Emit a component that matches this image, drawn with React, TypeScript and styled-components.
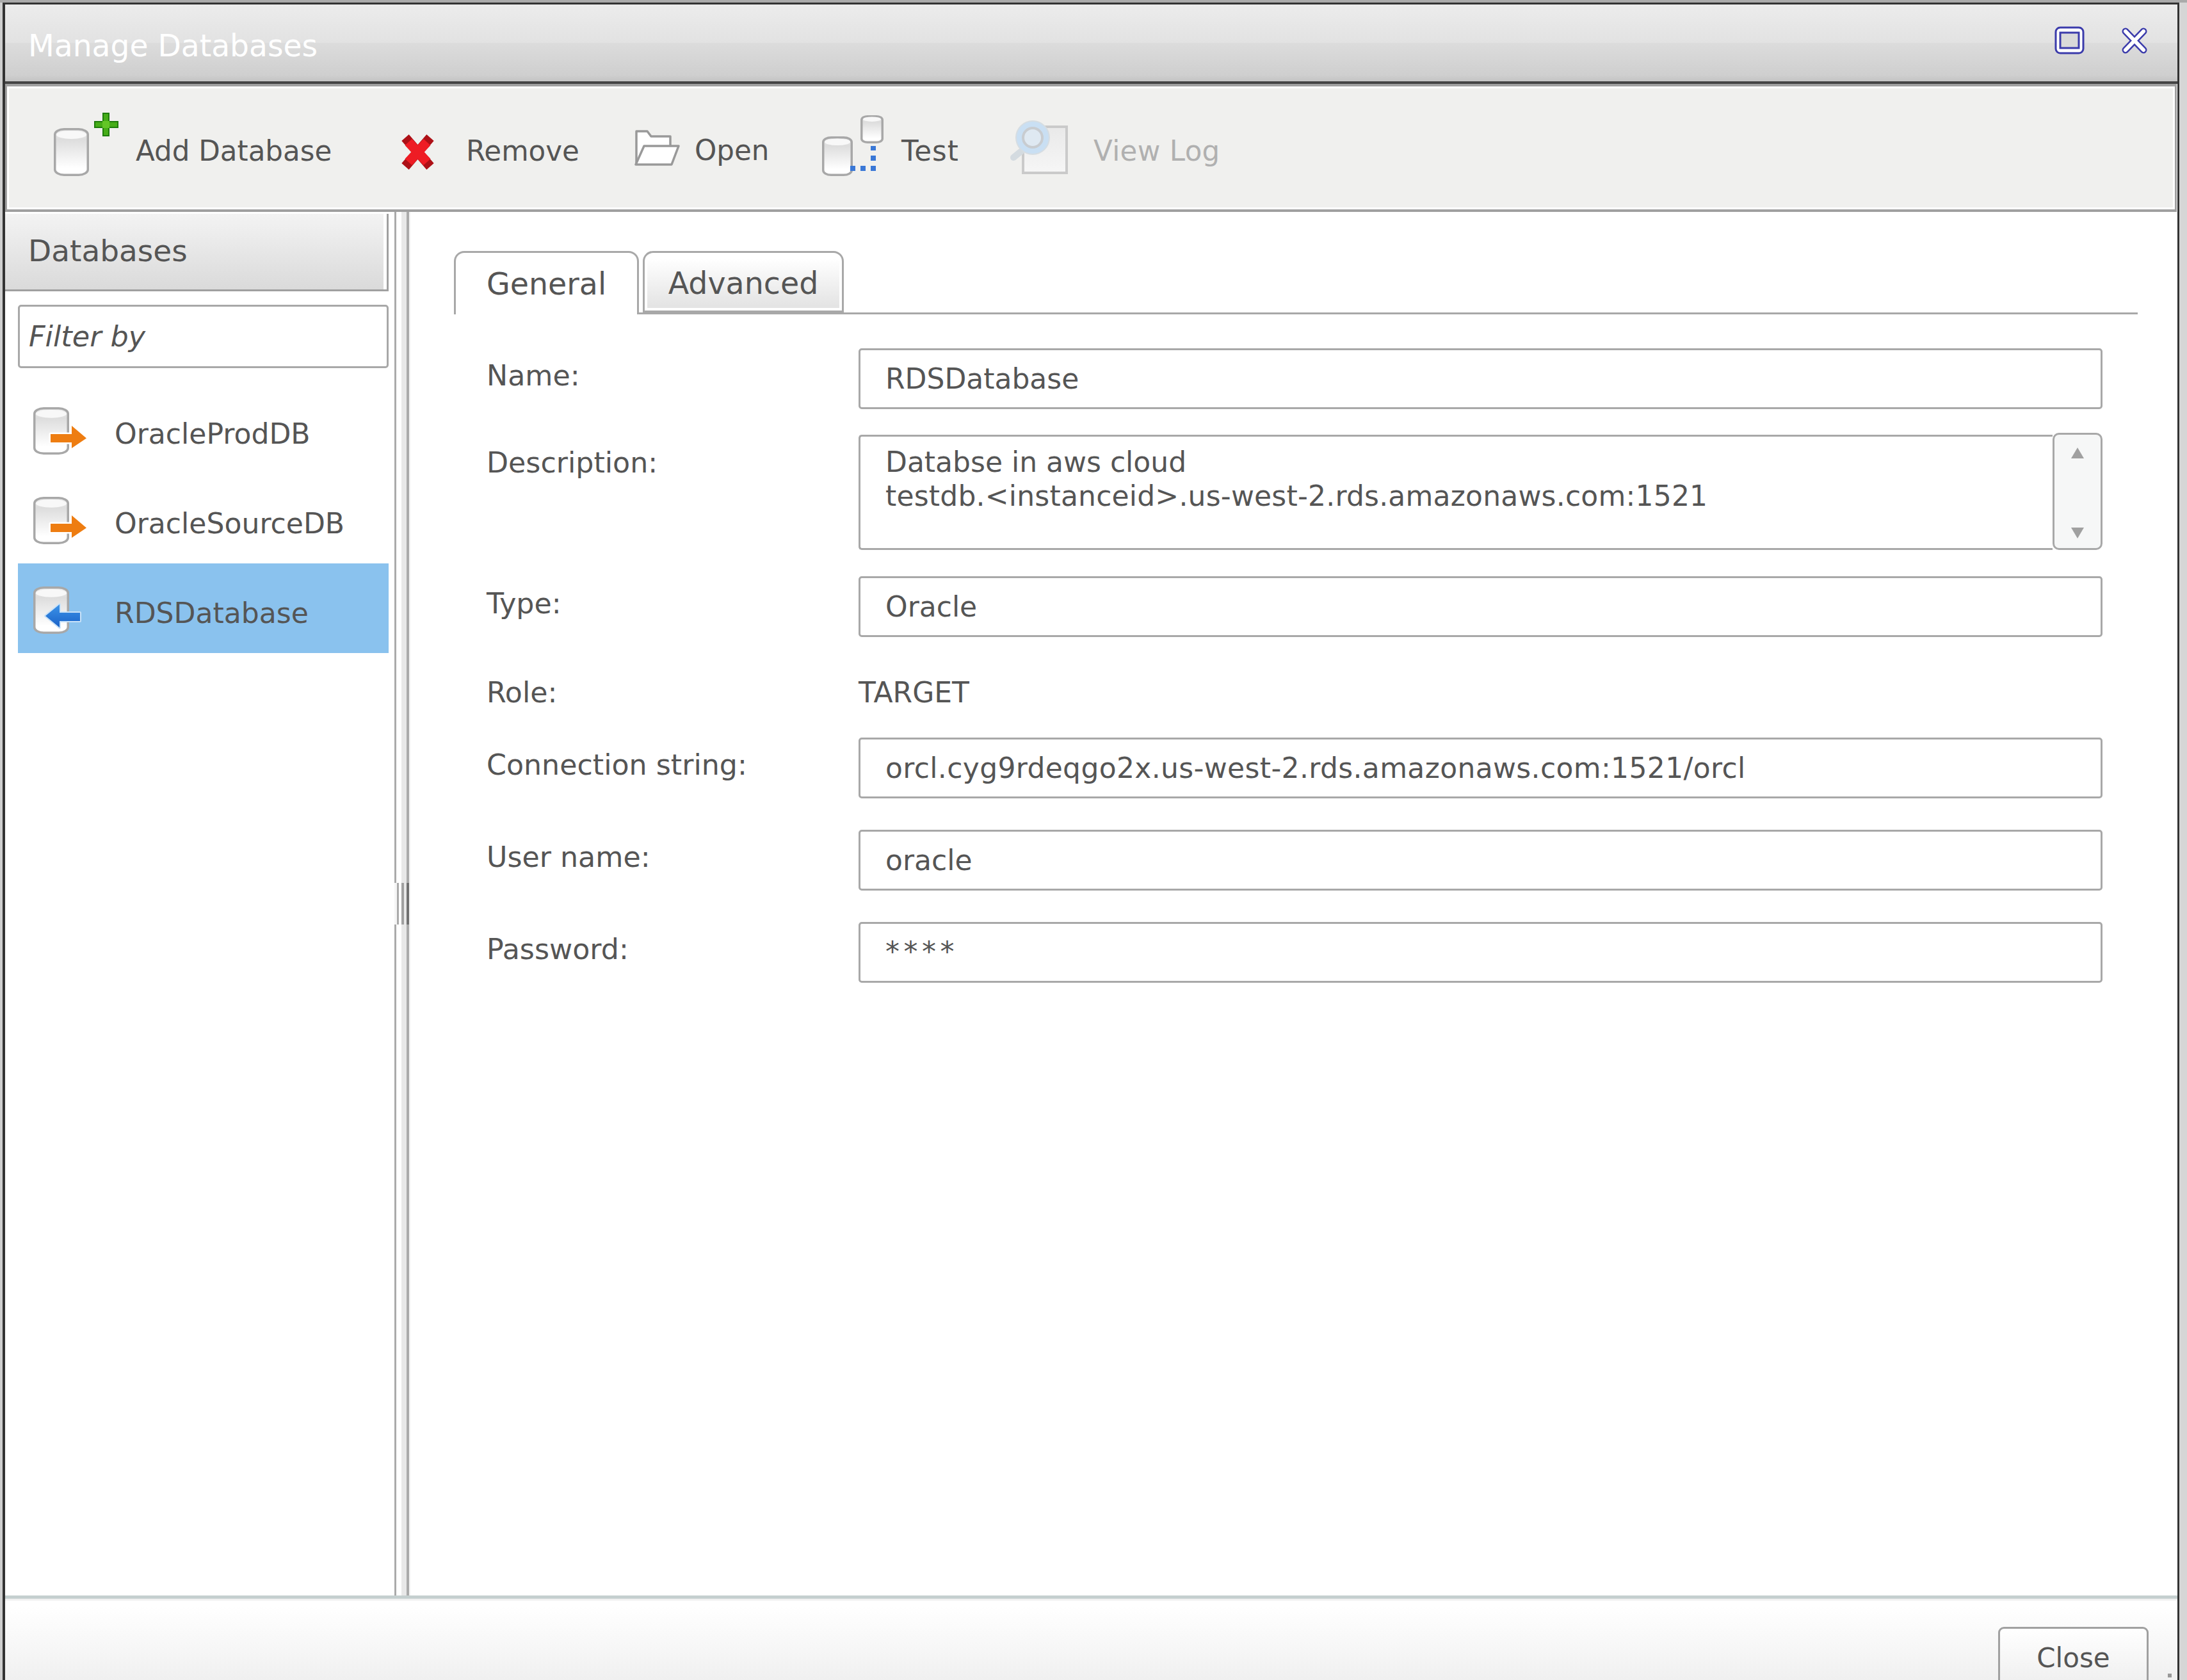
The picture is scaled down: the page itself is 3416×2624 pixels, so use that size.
import React from "react";
import styled, { createGlobalStyle } from "styled-components";

const GlobalStyle = createGlobalStyle`
  html, body { margin: 0; padding: 0; width: 3416px; height: 2624px; overflow: hidden; background: #d6d6d6; }
  body { font-family: "DejaVu Sans", "Liberation Sans", sans-serif; color: #555; }
  * { box-sizing: border-box; }
`;

const Page = styled.div`
  width: 3416px;
  height: 2624px;
  overflow: hidden;
  border-top: 4px solid #aaa;
  padding-left: 4px;
  background: linear-gradient(to right, #cfcfcf 4px, #d6d6d6 4px);
`;

const Window = styled.div`
  width: 3400px;
  height: 2620px;
  display: flex;
  flex-direction: column;
  border-left: 4px solid #333;
  border-right: 3px solid #333;
  border-top: 3px solid #333;
  background: #fff;
  overflow: hidden;
`;

const TitleBar = styled.div`
  flex: 0 0 124px;
  display: flex;
  align-items: center;
  padding: 0 46px 0 36px;
  border-bottom: 4px solid #444;
  background: linear-gradient(#ececec 0%, #e2e2e2 50%, #dcdcdc 50%, #cfcfcf 92%, #c4c4c4 100%);
`;

const Title = styled.div`
  font-size: 47.2px;
  line-height: 50px;
  padding-top: 10px;
  color: #fff;
`;

const TitleButtons = styled.div`
  margin-left: auto;
  display: flex;
  align-items: center;
  gap: 57px;
  margin-bottom: 8px;
`;

const Toolbar = styled.div`
  flex: 0 0 200px;
  display: flex;
  align-items: stretch;
  margin-right: 1px;
  padding-left: 73px;
  border: 4px solid #a0a0a0;
  border-width: 4px 3px;
  background: #f0f0ee;
  box-shadow: inset 0 0 0 3px #fff;
`;

const ToolButton = styled.div<{ $width: number; $gap: number }>`
  flex: 0 0 ${(p) => p.$width}px;
  display: flex;
  align-items: center;
  gap: ${(p) => p.$gap}px;
`;

const ToolLabel = styled.span<{ $disabled?: boolean; $drop?: number; $tracking?: number }>`
  font-size: 43.6px;
  line-height: 52px;
  padding-top: ${(p) => p.$drop ?? 9}px;
  letter-spacing: ${(p) => p.$tracking ?? 0}px;
  color: ${(p) => (p.$disabled ? "#b0b0b0" : "#555")};
  white-space: nowrap;
`;

const Body = styled.div`
  flex: 0 0 2161px;
  display: flex;
`;

const Sidebar = styled.div`
  flex: 0 0 608px;
  display: flex;
  flex-direction: column;
  padding-top: 3px;
`;

const SidebarHeader = styled.div`
  width: 599px;
  height: 121px;
  display: flex;
  align-items: center;
  padding: 0 0 4px 36px;
  font-size: 47px;
  border-right: 3px solid #a0a0a0;
  border-bottom: 3px solid #a0a0a0;
  background: linear-gradient(#f3f3f3, #dadada);
  box-shadow: inset -5px 0 0 #fff;
`;

const FilterBox = styled.div`
  height: 99px;
  margin: 21px 9px 25px 20px;
  display: flex;
  align-items: center;
  padding-left: 14px;
  border: 3px solid #a8a8a8;
  border-radius: 5px;
  font-size: 44.5px;
  font-style: italic;
`;

const DbRow = styled.div<{ $selected?: boolean }>`
  height: 140px;
  margin: 0 9px 0 20px;
  display: flex;
  align-items: center;
  gap: 45px;
  padding-left: 23px;
  background: ${(p) => (p.$selected ? "#8ac2ee" : "transparent")};
`;

const DbName = styled.span`
  font-size: 44.1px;
  line-height: 52px;
  padding-top: 16px;
`;

const Splitter = styled.div`
  flex: 0 0 25px;
  display: flex;
  align-items: center;
  background: linear-gradient(
    to right,
    #aaa 0 3px,
    #fff 3px 11px,
    #e8e8e8 11px 19px,
    #aaa 19px 23px,
    #f2f2f2 23px 25px
  );
`;

const SplitterGrip = styled.div`
  width: 25px;
  height: 65px;
  background: linear-gradient(
    to right,
    #f5f5f5 0 4px,
    #aaa 4px 7px,
    #fff 7px 11px,
    #a0a0a0 11px 15px,
    #e8e8e8 15px 19px,
    #707070 19px 23px,
    #f2f2f2 23px 25px
  );
`;

const Main = styled.div`
  flex: 1;
  display: flex;
  flex-direction: column;
  padding: 61px 62px 0 68px;
`;

const TabBar = styled.div`
  height: 99px;
  display: flex;
  align-items: flex-end;
  gap: 6px;
  border-bottom: 3px solid #a8a8a8;
`;

const Tab = styled.div<{ $active?: boolean; $width: number }>`
  width: ${(p) => p.$width}px;
  height: ${(p) => (p.$active ? 99 : 96)}px;
  margin-bottom: ${(p) => (p.$active ? -3 : 0)}px;
  display: flex;
  align-items: center;
  justify-content: center;
  font-size: 47.5px;
  padding-top: ${(p) => (p.$active ? 1 : 5)}px;
  border: 3px solid #a8a8a8;
  border-bottom: ${(p) => (p.$active ? "none" : "3px solid #a8a8a8")};
  border-radius: 16px 16px 0 0;
  background: ${(p) => (p.$active ? "#fff" : "linear-gradient(#fff 10%, #e4e4e4 92%)")};
  box-shadow: ${(p) => (p.$active ? "none" : "inset 4px 0 0 #fff, inset -4px 0 0 #fff, inset 0 -4px 0 #fff")};
`;

const Form = styled.div`
  display: flex;
  flex-direction: column;
  padding: 53px 0 0 51px;
`;

const FormRow = styled.div<{ $after?: number }>`
  display: grid;
  grid-template-columns: 581px 1943px;
  margin-bottom: ${(p) => p.$after ?? 0}px;
`;

const FieldLabel = styled.div<{ $top?: number }>`
  font-size: 44.3px;
  line-height: 53px;
  white-space: nowrap;
  padding-top: ${(p) => p.$top ?? 16}px;
`;

const Field = styled.div<{ $tracking?: number }>`
  height: 95px;
  display: flex;
  align-items: center;
  padding: 0 39px;
  border: 3px solid #a8a8a8;
  border-radius: 5px;
  font-size: 44px;
  letter-spacing: ${(p) => p.$tracking ?? 0}px;
  white-space: nowrap;
`;

const PasswordText = styled.span`
  letter-spacing: 6.5px;
  padding-bottom: 3px;
`;

const StaticValue = styled.div`
  font-size: 44px;
  line-height: 53px;
  padding-top: 2px;
`;

const DescriptionWrap = styled.div`
  height: 183px;
  display: flex;
  align-items: flex-end;
`;

const DescriptionText = styled.div`
  flex: 1;
  height: 180px;
  padding: 13px 0 0 39px;
  border: 3px solid #a8a8a8;
  border-right: none;
  border-radius: 5px 0 0 5px;
  font-size: 44px;
  line-height: 53px;
  white-space: nowrap;
`;

const DescriptionLine = styled.div<{ $tracking?: number }>`
  letter-spacing: ${(p) => p.$tracking ?? 0}px;
`;

const ScrollTrack = styled.div`
  flex: 0 0 78px;
  height: 183px;
  display: flex;
  flex-direction: column;
  justify-content: space-between;
  align-items: center;
  padding: 20px 0 15px;
  border: 3px solid #a8a8a8;
  border-radius: 10px;
  background: #f6f7f7;
`;

const ScrollArrow = styled.div<{ $down?: boolean }>`
  width: 0;
  height: 0;
  border-left: 10.5px solid transparent;
  border-right: 10.5px solid transparent;
  border-top: ${(p) => (p.$down ? "17px solid #a0a0a0" : "none")};
  border-bottom: ${(p) => (p.$down ? "none" : "17px solid #a0a0a0")};
`;

const Footer = styled.div`
  flex: 1;
  position: relative;
  display: flex;
  justify-content: flex-end;
  align-items: flex-start;
  padding: 44px 45px 0 0;
  overflow: hidden;
  border-top: 5px solid #c5cfcf;
  box-shadow: inset 0 3px 0 #f0f0f0;
  background: linear-gradient(#fff 10%, #f0f0f0 100%);
`;

const CloseButton = styled.div`
  flex: 0 0 235px;
  height: 92px;
  display: flex;
  align-items: center;
  justify-content: center;
  padding-top: 5px;
  font-size: 42px;
  border: 3px solid #a0a0a0;
  border-radius: 9px;
  background: linear-gradient(#fff, #efefef);
`;

const ResizeDot = styled.div`
  position: absolute;
  right: 9px;
  bottom: 4px;
  width: 6px;
  height: 6px;
  background: #999;
`;

const DefsHolder = styled.svg`
  display: block;
  width: 0;
  height: 0;
`;

const IconSvg = styled.svg`
  display: block;
  flex: none;
  overflow: visible;
`;

const Defs = () => (
  <DefsHolder aria-hidden="true">
    <defs>
      <linearGradient id="cylFill" x1="0" y1="0" x2="0" y2="1">
        <stop offset="0" stopColor="#ececec" />
        <stop offset="0.22" stopColor="#dddddd" />
        <stop offset="0.85" stopColor="#ffffff" />
        <stop offset="1" stopColor="#ffffff" />
      </linearGradient>
      <linearGradient id="paperFill" x1="0" y1="0" x2="0" y2="1">
        <stop offset="0" stopColor="#e9e9e9" />
        <stop offset="1" stopColor="#f6f6f6" />
      </linearGradient>
      <linearGradient id="blueArrow" x1="0" y1="0" x2="0" y2="1">
        <stop offset="0" stopColor="#3c93e8" />
        <stop offset="1" stopColor="#1a62c8" />
      </linearGradient>
    </defs>
  </DefsHolder>
);

const Cylinder = ({ x, y, w, h }: { x: number; y: number; w: number; h: number }) => (
  <g>
    <rect
      x={x + 1.75}
      y={y + 1.75}
      width={w - 3.5}
      height={h - 3.5}
      rx={w * 0.26}
      ry={w * 0.15}
      fill="url(#cylFill)"
      stroke="#a8a8a8"
      strokeWidth={3.5}
    />
    <ellipse cx={x + w / 2} cy={y + h * 0.14} rx={w / 2 - 4} ry={h * 0.085} fill="#f8f8f8" />
  </g>
);

const AddIcon = () => (
  <IconSvg width={101} height={120} viewBox="0 0 101 120">
    <Cylinder x={0} y={29} w={55} h={75} />
    <path d="M77 6h9v13h14v9H86v13h-9V28H64v-9h13z" fill="#46ad18" stroke="#1f7d0b" strokeWidth={2} />
    <rect x={76} y={18} width={11} height={11} fill="#63c626" />
  </IconSvg>
);

const RemoveIcon = () => (
  <IconSvg width={49} height={120} viewBox="0 0 49 120">
    <path d="M5 44L44 89M44 44L5 89" stroke="#ad1016" strokeWidth={15} />
    <path d="M10 51L39 82M39 51L10 82" stroke="#ee1c24" strokeWidth={15} />
  </IconSvg>
);

const FolderIcon = () => (
  <IconSvg width={71} height={120} viewBox="0 0 71 120">
    <path d="M3 84V34h17l6 8h30v14" fill="#fff" stroke="#999" strokeWidth={3.5} strokeLinejoin="round" />
    <path d="M15 57h54l-11 29H2z" fill="#fff" stroke="#999" strokeWidth={3.5} strokeLinejoin="round" />
  </IconSvg>
);

const TestIcon = () => (
  <IconSvg width={96} height={120} viewBox="0 0 96 120">
    <Cylinder x={0} y={42} w={48} h={62} />
    <Cylinder x={60} y={9} w={36} h={44} />
    <g fill="#3a78d6">
      <rect x={76} y={57} width={8} height={7} />
      <rect x={76} y={72} width={8} height={8} />
      <rect x={76} y={88} width={8} height={8} />
      <rect x={60} y={88} width={8} height={8} />
      <rect x={44} y={88} width={8} height={8} />
    </g>
  </IconSvg>
);

const LogIcon = () => (
  <IconSvg width={90} height={120} viewBox="0 0 90 120">
    <rect x={21} y={27} width={68} height={72} fill="url(#paperFill)" stroke="#cacaca" strokeWidth={4} />
    <path d="M22 62L6 75" stroke="#d4dbe0" strokeWidth={10} strokeLinecap="round" />
    <circle cx={36} cy={44} r={26} fill="#c9dff3" stroke="#d6dde2" strokeWidth={2} />
    <circle cx={36} cy={44} r={15} fill="#dfe9f2" stroke="#c8ccd0" strokeWidth={4} />
  </IconSvg>
);

const OutArrow = () => (
  <path
    d="M28 78h33V65l23 19.5L61 100V91H28z"
    fill="#ee7d11"
    stroke="#fff"
    strokeWidth={5}
    paintOrder="stroke"
    strokeLinejoin="round"
  />
);

const InArrow = () => (
  <path
    d="M74 77H42V64L20 82l22 18V90h32z"
    fill="url(#blueArrow)"
    stroke="#c9e2f8"
    strokeWidth={4}
    paintOrder="stroke"
    strokeLinejoin="round"
  />
);

const DbIcon = ({ target }: { target?: boolean }) => (
  <IconSvg width={83} height={140} viewBox="0 0 83 140">
    <Cylinder x={1} y={36} w={56} h={74} />
    {target ? <InArrow /> : <OutArrow />}
  </IconSvg>
);

const MaximizeIcon = () => (
  <IconSvg width={47} height={44} viewBox="0 0 47 44">
    <rect x={2} y={2} width={43} height={40} rx={7} fill="#fff" stroke="#3b3bab" strokeWidth={3} />
    <rect x={9} y={10} width={29} height={24} fill="#d9d9d9" stroke="#3b3bab" strokeWidth={3} />
  </IconSvg>
);

const CloseIcon = () => (
  <IconSvg width={42} height={43} viewBox="0 0 42 43">
    <path d="M7 7L35 36M35 7L7 36" stroke="#3b3bab" strokeWidth={11} strokeLinecap="round" />
    <path d="M7 7L35 36M35 7L7 36" stroke="#fff" strokeWidth={6} strokeLinecap="round" />
  </IconSvg>
);

const databases = [
  { name: "OracleProdDB" },
  { name: "OracleSourceDB" },
  { name: "RDSDatabase", target: true, selected: true },
];

export default function App() {
  return (
    <>
      <GlobalStyle />
      <Page>
        <Defs />
        <Window>
          <TitleBar>
            <Title>Manage Databases</Title>
            <TitleButtons>
              <MaximizeIcon />
              <CloseIcon />
            </TitleButtons>
          </TitleBar>
          <Toolbar>
            <ToolButton $width={544} $gap={27}>
              <AddIcon />
              <ToolLabel>Add Database</ToolLabel>
            </ToolButton>
            <ToolButton $width={363} $gap={51}>
              <RemoveIcon />
              <ToolLabel>Remove</ToolLabel>
            </ToolButton>
            <ToolButton $width={293} $gap={23}>
              <FolderIcon />
              <ToolLabel $drop={7}>Open</ToolLabel>
            </ToolButton>
            <ToolButton $width={293} $gap={28}>
              <TestIcon />
              <ToolLabel $tracking={1}>Test</ToolLabel>
            </ToolButton>
            <ToolButton $width={340} $gap={41}>
              <LogIcon />
              <ToolLabel $disabled $tracking={0.3}>View Log</ToolLabel>
            </ToolButton>
          </Toolbar>
          <Body>
            <Sidebar>
              <SidebarHeader>Databases</SidebarHeader>
              <FilterBox>Filter by</FilterBox>
              {databases.map((db) => (
                <DbRow key={db.name} $selected={db.selected}>
                  <DbIcon target={db.target} />
                  <DbName>{db.name}</DbName>
                </DbRow>
              ))}
            </Sidebar>
            <Splitter>
              <SplitterGrip />
            </Splitter>
            <Main>
              <TabBar>
                <Tab $active $width={289}>General</Tab>
                <Tab $width={314}>Advanced</Tab>
              </TabBar>
              <Form>
                <FormRow $after={37}>
                  <FieldLabel>Name:</FieldLabel>
                  <Field>RDSDatabase</Field>
                </FormRow>
                <FormRow $after={41}>
                  <FieldLabel $top={20}>Description:</FieldLabel>
                  <DescriptionWrap>
                    <DescriptionText>
                      <DescriptionLine>Databse in aws cloud</DescriptionLine>
                      <DescriptionLine $tracking={0.2}>
                        testdb.&lt;instanceid&gt;.us-west-2.rds.amazonaws.com:1521
                      </DescriptionLine>
                    </DescriptionText>
                    <ScrollTrack>
                      <ScrollArrow />
                      <ScrollArrow $down />
                    </ScrollTrack>
                  </DescriptionWrap>
                </FormRow>
                <FormRow $after={58}>
                  <FieldLabel>Type:</FieldLabel>
                  <Field>Oracle</Field>
                </FormRow>
                <FormRow $after={44}>
                  <FieldLabel $top={2}>Role:</FieldLabel>
                  <StaticValue>TARGET</StaticValue>
                </FormRow>
                <FormRow $after={49}>
                  <FieldLabel>Connection string:</FieldLabel>
                  <Field $tracking={0.35}>orcl.cyg9rdeqgo2x.us-west-2.rds.amazonaws.com:1521/orcl</Field>
                </FormRow>
                <FormRow $after={49}>
                  <FieldLabel>User name:</FieldLabel>
                  <Field>oracle</Field>
                </FormRow>
                <FormRow>
                  <FieldLabel>Password:</FieldLabel>
                  <Field>
                    <PasswordText>****</PasswordText>
                  </Field>
                </FormRow>
              </Form>
            </Main>
          </Body>
          <Footer>
            <CloseButton>Close</CloseButton>
            <ResizeDot />
          </Footer>
        </Window>
      </Page>
    </>
  );
}
